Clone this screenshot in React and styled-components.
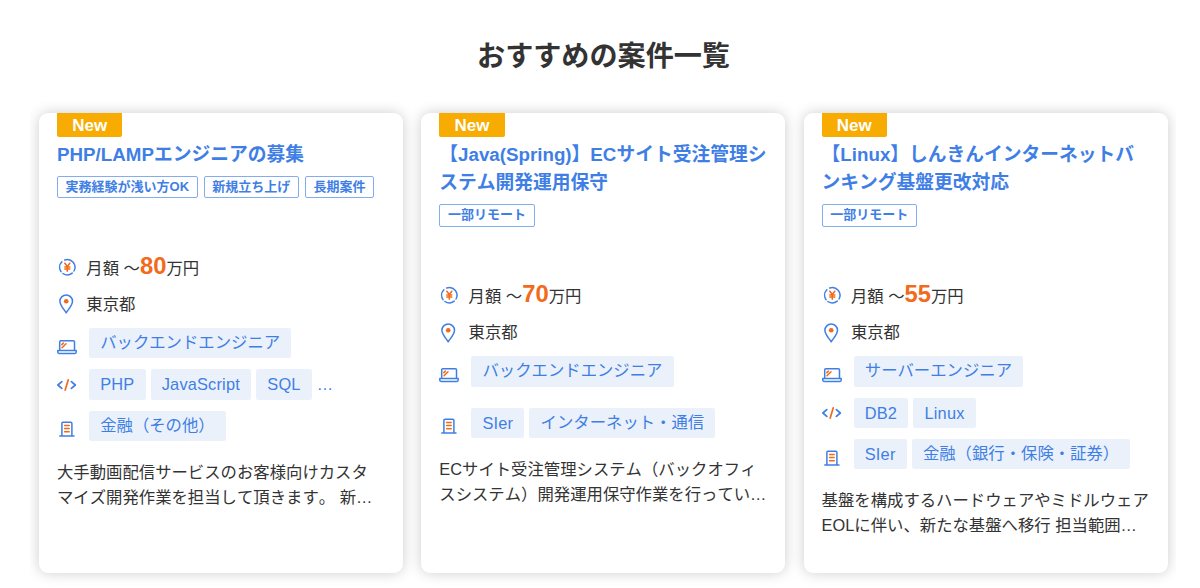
import React from "react";
import styled, { createGlobalStyle } from "styled-components";

const jobs = [
  {
    id: 1,
    title: ["PHP/LAMPエンジニアの募集"],
    tags: ["実務経験が浅い方OK", "新規立ち上げ", "長期案件"],
    price: "80",
    area: "東京都",
    position: "バックエンドエンジニア",
    skills: ["PHP", "JavaScript", "SQL"],
    moreSkills: true,
    industries: ["金融（その他）"],
    text: [
      "大手動画配信サービスのお客様向けカスタ",
      "マイズ開発作業を担当して頂きます。 新…",
    ],
  },
  {
    id: 2,
    title: ["【Java(Spring)】ECサイト受注管理シ", "ステム開発運用保守"],
    tags: ["一部リモート"],
    price: "70",
    area: "東京都",
    position: "バックエンドエンジニア",
    skills: [],
    industries: ["SIer", "インターネット・通信"],
    text: [
      "ECサイト受注管理システム（バックオフィ",
      "スシステム）開発運用保守作業を行ってい…",
    ],
  },
  {
    id: 3,
    title: ["【Linux】しんきんインターネットバ", "ンキング基盤更改対応"],
    tags: ["一部リモート"],
    price: "55",
    area: "東京都",
    position: "サーバーエンジニア",
    skills: ["DB2", "Linux"],
    industries: ["SIer", "金融（銀行・保険・証券）"],
    text: [
      "基盤を構成するハードウェアやミドルウェア",
      "EOLに伴い、新たな基盤へ移行 担当範囲…",
    ],
  },
];

const YenIcon = () => (
  <Icon width="20" height="20" viewBox="0 0 20 20">
    <path d="M7.7 3A7.7 7.7 0 0 1 17 14M15.2 16.1A7.7 7.7 0 0 1 5.9 16.5M4 14.6A7.7 7.7 0 0 1 4.9 4.8" />
    <Accent d="M7.8 6.2l2.5 3.3 2.5-3.3M10.3 9.5v4.7M7.8 10h5M7.8 12.1h5" />
  </Icon>
);

const PinIcon = () => (
  <Icon width="20" height="20" viewBox="0 0 20 20">
    <path d="M9.2 18.8C7.9 16.2 2.9 11.8 2.9 7.3a6.3 6.3 0 0 1 12.6 0c0 4.5-5 8.9-6.3 11.5z" />
    <AccentDot cx="9.2" cy="7.3" r="2.3" />
  </Icon>
);

const LaptopIcon = () => (
  <Icon width="20" height="16" viewBox="0 0 20 16">
    <path d="M2.7 11V2.8c0-.7.4-1.1 1.1-1.1h12.6c.7 0 1.1.4 1.1 1.1V11M.8 11.5h18.4v1.4c0 1-.6 1.6-1.6 1.6H2.4c-1 0-1.6-.6-1.6-1.6z" />
    <Accent d="M4.8 5.6l1.5-1.5M5 8.8l4-4" />
  </Icon>
);

const CodeIcon = () => (
  <Icon width="20" height="12" viewBox="0 0 20 12" $weight="1.7">
    <path d="M4.8 2.6L.9 6l3.9 3.4M14.4 2.6L18.3 6l-3.9 3.4" />
    <Accent d="M11.2.9L8.2 11.1" />
  </Icon>
);

const BuildingIcon = () => (
  <Icon width="20" height="16" viewBox="0 0 20 16">
    <path d="M2.8 15.1h14.2M4.9 15V2.4c0-.7.4-1.1 1.1-1.1h7.8c.7 0 1.1.4 1.1 1.1V15" />
    <Accent d="M7.6 4.5h4.6M7.6 7.6h4.6M7.6 10.7h4.6" />
  </Icon>
);

const JobCard = ({ job }) => (
  <Card>
    <NewBadge>New</NewBadge>
    <Title>
      {job.title.map((line) => (
        <Line key={line}>{line}</Line>
      ))}
    </Title>
    <TagList>
      {job.tags.map((tag) => (
        <Tag key={tag}>{tag}</Tag>
      ))}
    </TagList>
    <InfoRow>
      <YenIcon />
      <InfoText>
        月額 〜<Price>{job.price}</Price>万円
      </InfoText>
    </InfoRow>
    <InfoRow>
      <PinIcon />
      <InfoText>{job.area}</InfoText>
    </InfoRow>
    <ChipRow>
      <IconSlot $drop="7px">
        <LaptopIcon />
      </IconSlot>
      <Chip>{job.position}</Chip>
    </ChipRow>
    {job.skills.length > 0 ? (
      <ChipRow>
        <IconSlot $drop="1px">
          <CodeIcon />
        </IconSlot>
        {job.skills.map((skill) => (
          <Chip key={skill} $latin>
            {skill}
          </Chip>
        ))}
        {job.moreSkills && <More>…</More>}
      </ChipRow>
    ) : (
      <EmptyRow />
    )}
    <ChipRow>
      <IconSlot $drop="7px">
        <BuildingIcon />
      </IconSlot>
      {job.industries.map((industry) => (
        <Chip key={industry} $latin={industry === "SIer"}>
          {industry}
        </Chip>
      ))}
    </ChipRow>
    <Description>
      {job.text.map((line) => (
        <Line key={line}>{line}</Line>
      ))}
    </Description>
  </Card>
);

const App = () => (
  <React.Fragment>
    <GlobalStyle />
    <Section>
      <Heading>おすすめの案件一覧</Heading>
      <CardList>
        {jobs.map((job) => (
          <JobCard key={job.id} job={job} />
        ))}
      </CardList>
    </Section>
  </React.Fragment>
);

export default App;

const GlobalStyle = createGlobalStyle`
  * {
    box-sizing: border-box;
  }

  body {
    margin: 0;
    overflow: hidden;
    background-color: #fff;
    color: #333;
    font-family: "Liberation Sans", "Noto Sans CJK JP", sans-serif;
    font-size: 16.36px;
    font-kerning: none;
  }
`;

const Section = styled.section`
  height: 588px;
  overflow: hidden;
`;

const Heading = styled.h2`
  margin: 0;
  padding: 37px 0 0 7px;
  height: 93px;
  font-size: 28.1px;
  line-height: 40px;
  text-align: center;
`;

const CardList = styled.div`
  display: grid;
  grid-template-columns: repeat(3, 364px);
  column-gap: 18.3px;
  width: 1146px;
  height: 495px;
  margin-left: 30px;
  padding: 20px 0 0 9px;
  overflow: hidden;
`;

const Card = styled.article`
  display: flex;
  flex-direction: column;
  height: 459.5px;
  padding: 0 18px;
  border-radius: 9px;
  background-color: #fff;
  box-shadow: 0 0 14px rgba(0, 0, 0, 0.2);
`;

const NewBadge = styled.span`
  width: 65.3px;
  height: 24px;
  border-radius: 0 0 2px 2px;
  background-color: #f8ab00;
  color: #fff;
  font-size: 17px;
  font-weight: bold;
  line-height: 25px;
  text-align: center;
`;

const Title = styled.h3`
  margin: 4px 0 0;
  color: #3f7fe5;
  font-size: 18.75px;
  line-height: 28.4px;
`;

const Line = styled.span`
  display: block;
  white-space: nowrap;
`;

const TagList = styled.div`
  display: flex;
  gap: 6px;
  height: 72px;
  margin-top: 6.5px;
`;

const Tag = styled.span`
  height: 22.5px;
  padding: 0 7.6px;
  border: 1px solid #84adf0;
  border-radius: 2px;
  color: #3f7fe5;
  font-size: 13px;
  font-weight: bold;
  line-height: 19.5px;
  white-space: nowrap;
`;

const InfoRow = styled.div`
  display: flex;
  align-items: center;
  height: 37.5px;
`;

const InfoText = styled.p`
  margin: 0 0 0 9.3px;
  line-height: 27px;
  white-space: nowrap;
`;

const Price = styled.span`
  color: #f26a1b;
  font-size: 23.8px;
  font-weight: bold;
`;

const ChipRow = styled.div`
  display: flex;
  align-items: center;
  height: 30.3px;
  margin-bottom: 11.1px;

  ${InfoRow} + & {
    margin-top: 5px;
  }
`;

const EmptyRow = styled.div`
  height: 10px;
`;

const IconSlot = styled.span`
  display: flex;
  width: 20px;
  margin-right: 7px;
  padding-top: ${(props) => props.$drop};
`;

const Chip = styled.span`
  height: 30.3px;
  margin-left: 5px;
  padding: 0 11.2px;
  border-radius: 2px;
  background-color: #eaf1fa;
  color: #3f7fe5;
  letter-spacing: ${(props) => (props.$latin ? "0.18px" : "normal")};
  line-height: ${(props) => (props.$latin ? "31px" : "28px")};
  white-space: nowrap;
`;

const More = styled.span`
  margin-left: 5px;
  color: #3f7fe5;
`;

const Description = styled.p`
  margin: 8px 0 0;
  line-height: 24.8px;
`;

const Icon = styled.svg`
  flex: none;
  fill: none;
  stroke: #3f7fe5;
  stroke-width: ${(props) => props.$weight || "1.5"};
  stroke-linecap: round;
  stroke-linejoin: round;
`;

const Accent = styled.path`
  stroke: #f26a1b;
`;

const AccentDot = styled.circle`
  fill: #f26a1b;
  stroke: none;
`;
